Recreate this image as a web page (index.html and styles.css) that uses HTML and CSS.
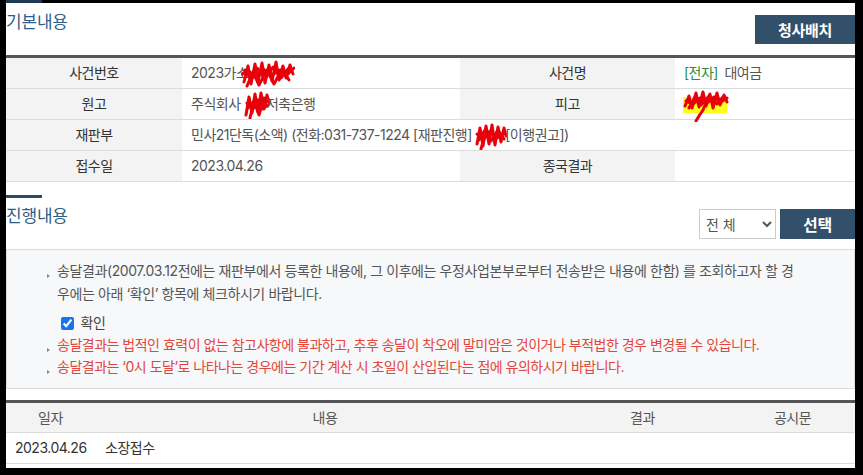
FILE: index.html
```html
<!DOCTYPE html>
<html lang="ko">
<head>
<meta charset="utf-8">
<title>나의사건검색</title>
<link rel="stylesheet" href="styles.css">
</head>
<body>
<div class="page">
  <div class="topedge"><span class="bar"></span></div>
  <div class="sec-head first">
    <h2 class="title">기본내용</h2>
    <button class="btn btn-wide" type="button">청사배치</button>
  </div>
  <table class="info">
    <colgroup><col class="c1"><col class="c2"><col class="c3"><col class="c4"></colgroup>
    <tr>
      <th>사건번호</th>
      <td>2023가소<svg class="redact r1" width="54" height="28" viewBox="0 0 54 28"><path d="M3 22 L7 6 L10 24 L14 4 L17 22 L21 3 L24 23 L28 5 L31 21 L35 2 L38 20 L42 6 L45 18 L49 5 L52 14" /><path d="M1 14 L8 11 L14 17 L22 9 L30 16 L38 10 L46 15 L53 8" /><path d="M6 26 L12 12 L18 25 L26 10 L33 24 L41 9 L48 20" /><path d="M4 10 L10 20 L16 8 L24 19 L32 7 L40 18 L47 9" /></svg></td>
      <th>사건명</th>
      <td><span class="green">[전자]</span> 대여금</td>
    </tr>
    <tr>
      <th>원고</th>
      <td>주식회사 <svg class="redact r2" width="26" height="28" viewBox="0 0 26 28"><path d="M2 24 L5 6 L8 22 L11 3 L14 21 L17 2 L20 18 L23 4 L25 12" /><path d="M3 12 L9 18 L14 9 L19 16 L24 8" /><path d="M6 27 L10 10 L15 24 L20 7" /><path d="M4 17 L12 8 L18 18 L24 14" /></svg>저축은행</td>
      <th>피고</th>
      <td><svg class="redact r4" width="46" height="34" viewBox="0 0 46 34"><rect class="hl" x="0" y="9" width="44" height="16" /><path d="M2 18 L6 8 L9 20 L13 5 L16 19 L20 4 L23 18 L27 6 L30 20 L34 5 L37 17 L41 7 L44 14" /><path d="M3 13 L10 16 L17 10 L24 15 L31 9 L38 14 L44 10" /><path d="M6 20 L12 9 L18 17 L26 8 L34 16 L40 9" /><path d="M24 12 L20 22 L16 28 L13 33" /></svg></td>
    </tr>
    <tr>
      <th>재판부</th>
      <td colspan="3">민사21단독(소액) (전화:031-737-1224 [재판진행] <svg class="redact r3" width="32" height="28" viewBox="0 0 32 28"><path d="M2 22 L5 6 L8 24 L11 4 L14 22 L17 3 L20 23 L23 5 L26 20 L29 6 L31 14" /><path d="M2 12 L9 17 L15 9 L22 16 L30 10" /><path d="M4 18 L10 8 L16 19 L23 8 L29 17" /><path d="M8 20 L6 27" /></svg>[이행권고])</td>
    </tr>
    <tr>
      <th>접수일</th>
      <td>2023.04.26</td>
      <th>종국결과</th>
      <td></td>
    </tr>
  </table>

  <div class="accent"></div>
  <div class="sec-head second">
    <h2 class="title">진행내용</h2>
    <div class="controls">
      <select class="sel" aria-label="구분">
        <option>전 체</option>
        <option>기일</option>
        <option>명령</option>
        <option>제출서류</option>
        <option>송달</option>
      </select>
      <button class="btn btn-sel" type="button">선택</button>
    </div>
  </div>

  <div class="notice">
    <ul class="notice-list">
      <li class="intro">송달결과(2007.03.12전에는 재판부에서 등록한 내용에, 그 이후에는 우정사업본부로부터 전송받은 내용에 한함) 를 조회하고자 할 경우에는 아래 ‘확인’ 항목에 체크하시기 바랍니다.
        <label class="confirm"><input type="checkbox" checked> 확인</label>
      </li>
      <li class="warn">송달결과는 법적인 효력이 없는 참고사항에 불과하고, 추후 송달이 착오에 말미암은 것이거나 부적법한 경우 변경될 수 있습니다.</li>
      <li class="warn">송달결과는 ‘0시 도달’로 나타나는 경우에는 기간 계산 시 초일이 산입된다는 점에 유의하시기 바랍니다.</li>
    </ul>
  </div>

  <table class="progress">
    <colgroup><col class="p1"><col class="p2"><col class="p3"><col class="p4"></colgroup>
    <thead>
      <tr><th>일자</th><th>내용</th><th>결과</th><th>공시문</th></tr>
    </thead>
    <tbody>
      <tr><td class="date">2023.04.26</td><td class="content">소장접수</td><td></td><td></td></tr>
    </tbody>
  </table>
</div>
</body>
</html>
```
FILE: styles.css
```css
html, body {
  margin: 0;
  padding: 0;
}
body {
  background: #000;
  font-family: Inter, "Noto Sans CJK KR", sans-serif;
  font-size: 14px;
  letter-spacing: -0.5px;
  color: #555;
}
.page {
  margin: 0 8px 0 6px;
  height: 468px;
  background: #fff;
  overflow: hidden;
}
.topedge {
  height: 3px;
  background: #000;
  display: flex;
}
.topedge .bar {
  width: 36px;
  background: #1f3a57;
}
.sec-head {
  display: flex;
  justify-content: space-between;
  align-items: flex-start;
}
.sec-head.first {
  height: 52px;
}
.sec-head.first .title {
  margin-top: 7px;
}
.sec-head.first .btn {
  margin-top: 12px;
}
.sec-head.second {
  height: 51px;
}
.sec-head.second .title {
  margin-top: 6px;
}
.sec-head.second .controls {
  margin-top: 11px;
}
.title {
  margin: 0;
  font-size: 17px;
  line-height: 24px;
  font-weight: 400;
  letter-spacing: -0.2px;
  color: #2f5e86;
}
.btn {
  border: 0;
  padding: 0;
  background: #32506a;
  color: #fff;
  font-family: Inter, "Noto Sans CJK KR", sans-serif;
  font-weight: 700;
  font-size: 15px;
  letter-spacing: -0.3px;
  cursor: pointer;
}
.btn-wide {
  width: 100px;
  height: 29px;
}
.btn-sel {
  width: 75px;
  height: 30px;
  font-size: 16px;
}
.controls {
  display: flex;
  gap: 4px;
}
.sel {
  width: 77px;
  height: 30px;
  border: 1px solid #ccc;
  border-radius: 0;
  background: #fff;
  color: #555;
  font-family: Inter, "Noto Sans CJK KR", sans-serif;
  font-size: 14px;
  padding: 0 2px;
}

/* basic info table */
.info {
  width: 100%;
  table-layout: fixed;
  border-collapse: separate;
  border-spacing: 0;
  border-top: 3px solid #555;
}
.info .c1 { width: 176px; }
.info .c2 { width: 278px; }
.info .c3 { width: 215px; }
.info .c4 { width: 180px; }
.info th,
.info td {
  height: 30px;
  padding: 0;
  line-height: 30px;
  border-bottom: 1px solid #dcdcdc;
  white-space: nowrap;
}
.info th {
  background: #f3f3f3;
  color: #333;
  font-weight: 400;
  text-align: center;
}
.info td {
  padding-left: 9px;
  color: #555;
  text-align: left;
}
.green {
  color: #2e8b3a;
  margin-right: 3px;
}
.redact {
  vertical-align: middle;
}
.redact path {
  fill: none;
  stroke: #e8000b;
  stroke-width: 3;
  stroke-linejoin: round;
  stroke-linecap: round;
}
.redact .hl {
  fill: #ffff1a;
}
.r1 { margin: -4px 0 -4px -7px; }
.r2 { margin: -4px -4px -4px 0; }
.r3 { margin: -4px -2px -4px 0; }
.r4 { margin: -6px 0 -6px -1px; }

/* section 2 */
.accent {
  width: 36px;
  height: 3px;
  margin-top: 13px;
  background: #2b4a68;
}
.notice {
  border: 1px solid #dcdcdc;
  background: #f7f8fa;
  padding: 9px 52px 10px 50px;
}
.notice-list {
  margin: 0;
  padding: 0;
  list-style: none;
}
.notice-list li {
  line-height: 23px;
  color: #555;
  list-style: none;
}
.notice-list li.intro {
  letter-spacing: -0.4px;
}
.notice-list li::before {
  content: "";
  display: inline-block;
  width: 0;
  height: 0;
  border-left: 3px solid #888;
  border-top: 2.5px solid transparent;
  border-bottom: 2.5px solid transparent;
  margin-left: -10px;
  margin-right: 7px;
  vertical-align: -2px;
}
.notice-list li.warn {
  line-height: 22px;
  color: #e2463c;
}
.confirm {
  display: block;
  margin-top: 7px;
  line-height: 22px;
  color: #444;
}
.confirm input {
  margin: 0 3px 0 4px;
  width: 13px;
  height: 13px;
  vertical-align: -2px;
  accent-color: #1a73e8;
}

/* progress table */
.progress {
  width: 100%;
  margin-top: 11px;
  table-layout: fixed;
  border-collapse: separate;
  border-spacing: 0;
  border-top: 3px solid #555;
}
.progress .p1 { width: 89px; }
.progress .p2 { width: 460px; }
.progress .p3 { width: 175px; }
.progress .p4 { width: 125px; }
.progress th {
  height: 29px;
  padding: 0;
  line-height: 29px;
  background: #f3f3f3;
  color: #555;
  font-weight: 400;
  text-align: center;
  border-bottom: 1px solid #dcdcdc;
}
.progress td {
  height: 30px;
  padding: 0;
  line-height: 30px;
  color: #333;
  border-bottom: 1px solid #dcdcdc;
  white-space: nowrap;
}
.progress td.date {
  padding-left: 9px;
}
.progress td.content {
  padding-left: 10px;
}
```
